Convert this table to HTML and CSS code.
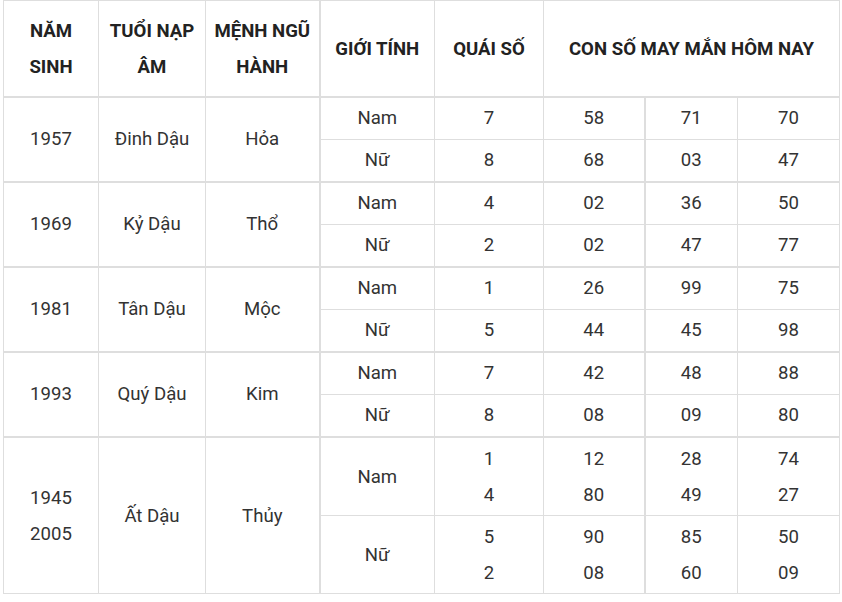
FILE: index.html
```html
<!DOCTYPE html>
<html lang="vi">
<head>
<meta charset="utf-8">
<link rel="stylesheet" href="styles.css">
</head>
<body>
<table class="luck">
  <colgroup>
    <col class="c1"><col class="c2"><col class="c3"><col class="c4"><col class="c5"><col class="c6"><col class="c7"><col class="c8">
  </colgroup>
  <thead>
    <tr>
      <th>NĂM SINH</th>
      <th>TUỔI NẠP ÂM</th>
      <th>MỆNH NGŨ HÀNH</th>
      <th class="thick">GIỚI TÍNH</th>
      <th>QUÁI SỐ</th>
      <th colspan="3">CON SỐ MAY MẮN HÔM NAY</th>
    </tr>
  </thead>
  <tbody>
    <tr class="grp">
      <td rowspan="2">1957</td><td rowspan="2">Đinh Dậu</td><td rowspan="2">Hỏa</td>
      <td class="thick">Nam</td><td>7</td><td>58</td><td class="thick">71</td><td>70</td>
    </tr>
    <tr>
      <td class="thick">Nữ</td><td>8</td><td>68</td><td class="thick">03</td><td>47</td>
    </tr>
    <tr class="grp">
      <td rowspan="2">1969</td><td rowspan="2">Kỷ Dậu</td><td rowspan="2">Thổ</td>
      <td class="thick">Nam</td><td>4</td><td>02</td><td class="thick">36</td><td>50</td>
    </tr>
    <tr>
      <td class="thick">Nữ</td><td>2</td><td>02</td><td class="thick">47</td><td>77</td>
    </tr>
    <tr class="grp">
      <td rowspan="2">1981</td><td rowspan="2">Tân Dậu</td><td rowspan="2">Mộc</td>
      <td class="thick">Nam</td><td>1</td><td>26</td><td class="thick">99</td><td>75</td>
    </tr>
    <tr>
      <td class="thick">Nữ</td><td>5</td><td>44</td><td class="thick">45</td><td>98</td>
    </tr>
    <tr class="grp">
      <td rowspan="2">1993</td><td rowspan="2">Quý Dậu</td><td rowspan="2">Kim</td>
      <td class="thick">Nam</td><td>7</td><td>42</td><td class="thick">48</td><td>88</td>
    </tr>
    <tr>
      <td class="thick">Nữ</td><td>8</td><td>08</td><td class="thick">09</td><td>80</td>
    </tr>
    <tr class="grp tall">
      <td rowspan="2">1945<br>2005</td><td rowspan="2">Ất Dậu</td><td rowspan="2">Thủy</td>
      <td class="thick">Nam</td><td>1<br>4</td><td>12<br>80</td><td class="thick">28<br>49</td><td>74<br>27</td>
    </tr>
    <tr class="tall">
      <td class="thick">Nữ</td><td>5<br>2</td><td>90<br>08</td><td class="thick">85<br>60</td><td>50<br>09</td>
    </tr>
  </tbody>
</table>
</body>
</html>
```
FILE: styles.css
```css
html, body {
  margin: 0;
  padding: 0;
  background: #ffffff;
}
body {
  padding-left: 3px;
  font-family: Roboto, "Noto Sans", "Liberation Sans", sans-serif;
  color: #333333;
}
.luck {
  border-collapse: collapse;
  table-layout: fixed;
  width: 836px;
  font-size: 18.6px;
  line-height: 36px;
}
.c1 { width: 95px; }
.c2 { width: 107px; }
.c3 { width: 114px; }
.c4 { width: 115px; }
.c5 { width: 109px; }
.c6 { width: 101px; }
.c7 { width: 93px; }
.c8 { width: 102px; }
.luck th,
.luck td {
  border: 1px solid #dedede;
  text-align: center;
  vertical-align: middle;
  padding: 2px 6px 3px;
}
.luck th {
  font-weight: 700;
  color: #222222;
  padding: 12px 6px 11px;
  border-bottom: 2px solid #dedede;
}
.luck .grp td {
  border-top: 2px solid #dedede;
}
.luck .thick {
  border-left: 2px solid #dedede;
}
.luck .tall td {
  padding-top: 3px;
  padding-bottom: 2px;
}
```
